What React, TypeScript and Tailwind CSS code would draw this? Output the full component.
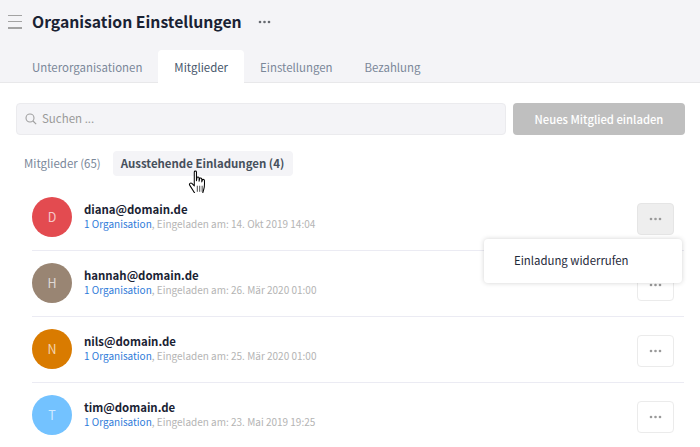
const members = [
  { initial: 'D', email: 'diana@domain.de', date: '14. Okt 2019 14:04', color: 'bg-[#e34b50]' },
  { initial: 'H', email: 'hannah@domain.de', date: '26. Mär 2020 01:00', color: 'bg-[#998573]' },
  { initial: 'N', email: 'nils@domain.de', date: '25. Mär 2020 01:00', color: 'bg-[#d97b00]' },
  { initial: 'T', email: 'tim@domain.de', date: '23. Mai 2019 19:25', color: 'bg-[#73c2ff]' },
];

const Dots = ({ className }: { className: string }) => (
  <svg width="13" height="4" viewBox="0 0 13 4" className={className} fill="currentColor">
    <circle cx="2" cy="2" r="1.3" />
    <circle cx="6.500" cy="2" r="1.3" />
    <circle cx="11" cy="2" r="1.3" />
  </svg>
);

const HandCursor = () => (
  <svg width="18" height="23" viewBox="0 0 14.500 19" className="absolute left-[75px] top-[19px]">
    <path
      d="M5 1.600c0-1 1.800-1 1.800 0v7.200l.4-2.400c.2-1 1.800-.8 1.800.2v2.600l.4-2c.2-1 1.800-.8 1.800.2v2.400l.5-1.500c.3-.9 1.700-.6 1.700.4 0 2.500.3 4.600-.5 7l-1 3.600c-.1.4-.4.7-.8.7H6.500c-.4 0-.7-.2-.9-.5L1.200 12.500c-.7-1.100.8-2.400 1.800-1.400L5 13.100Z"
      fill="#fff"
      stroke="#000"
      strokeWidth=".85"
      strokeLinejoin="round"
    />
    <path d="M7.500 13v5M9.500 13v5M11.500 13v5" stroke="#000" strokeWidth=".6" />
  </svg>
);

const App = () => {
  return (
    <div className="h-[447px] w-[700px] overflow-hidden bg-white font-['Noto_Sans_CJK_SC','Noto_Sans',sans-serif]">
      <header className="h-[83px] border-b border-[#e8e8ea] bg-[#f4f4f7]">
        <div className="flex h-[50px] items-center pb-[6px] pl-2">
          <div className="flex w-[14px] flex-col gap-[5px]">
            <span className="h-px bg-[#a3a3a3]" />
            <span className="h-px bg-[#a3a3a3]" />
            <span className="h-[2px] bg-[#a3a3a3]" />
          </div>
          <h1 className="ml-[10px] text-[15.750px] font-bold leading-6 text-[#1a2233]">
            Organisation Einstellungen
          </h1>
          <Dots className="ml-4 text-[#666a70]" />
        </div>
        <nav className="flex pl-4 text-[11.450px] text-[#7a8799]">
          <span className="flex h-[33px] items-center px-4 pt-[2px]">Unterorganisationen</span>
          <span className="flex h-[33px] items-center rounded-t bg-white px-4 pt-[2px] text-[#46566b]">Mitglieder</span>
          <span className="flex h-[33px] items-center px-4 pt-[2px]">Einstellungen</span>
          <span className="flex h-[33px] items-center px-4 pt-[2px]">Bezahlung</span>
        </nav>
      </header>

      <main className="px-4 pt-5">
        <div className="flex gap-[7px]">
          <div className="flex h-8 w-[490px] shrink-0 items-center rounded-sm border border-[#ebebee] bg-[#f4f4f7] pl-2 text-[11.500px] text-[#9a9a9a]">
            <svg width="12" height="12" viewBox="0 0 12 12" fill="none" stroke="#a0a0a0" strokeWidth="1.1">
              <circle cx="5" cy="5" r="4" />
              <path d="M8 8l3.200 3.200" />
            </svg>
            <span className="ml-[5px]">Suchen ...</span>
          </div>
          <button className="h-8 w-[172px] shrink-0 rounded-sm bg-[#bfbfbf] text-[11.250px] font-medium text-white">
            Neues Mitglied einladen
          </button>
        </div>

        <div className="mt-4 flex items-center pl-2 text-[11.450px] leading-[25px]">
          <span className="text-[#7a8799]">Mitglieder (65)</span>
          <div className="relative ml-[12px] w-[180px]">
            <span className="block rounded bg-[#f4f4f7] px-2 font-bold text-[#46505c]">
              Ausstehende Einladungen (4)
            </span>
            <HandCursor />
          </div>
        </div>

        <ul className="relative mt-[8px] pl-4">
          {members.map((m, i) => (
            <li key={m.email} className={`flex h-[66px] items-center ${i > 0 ? 'border-t border-[#ebebf3] pb-px' : ''}`}>
              <div className={`flex h-10 w-10 items-center justify-center rounded-full text-[12.500px] text-white/70 ${m.color}`}>
                {m.initial}
              </div>
              <div className="ml-3 -mt-[2px]">
                <div className="text-[11.400px] font-semibold leading-[16px] text-[#1a2233]">{m.email}</div>
                <div className="text-[10px] leading-[14px] text-[#b4b4b4]">
                  <span className="text-[#2f7bd9]">1 Organisation</span>, Eingeladen am: {m.date}
                </div>
              </div>
              <button
                className={`ml-auto mr-[10px] mt-[4px] flex h-8 w-[37px] items-center justify-center rounded-sm border ${
                  i === 0 ? 'border-[#e5e5e5] bg-[#eeeeee]' : 'border-[#ebebeb] bg-white'
                }`}
              >
                <Dots className="text-[#9a9a9a]" />
              </button>
            </li>
          ))}
          <li className="absolute right-[2px] top-[55px] flex h-[44px] w-[198px] items-center rounded bg-white pl-[30px] text-[11.400px] text-[#1f2a3a] shadow-[0_0_5px_rgba(0,0,0,0.18)]">
            Einladung widerrufen
          </li>
        </ul>
      </main>
    </div>
  );
};

export default App;
